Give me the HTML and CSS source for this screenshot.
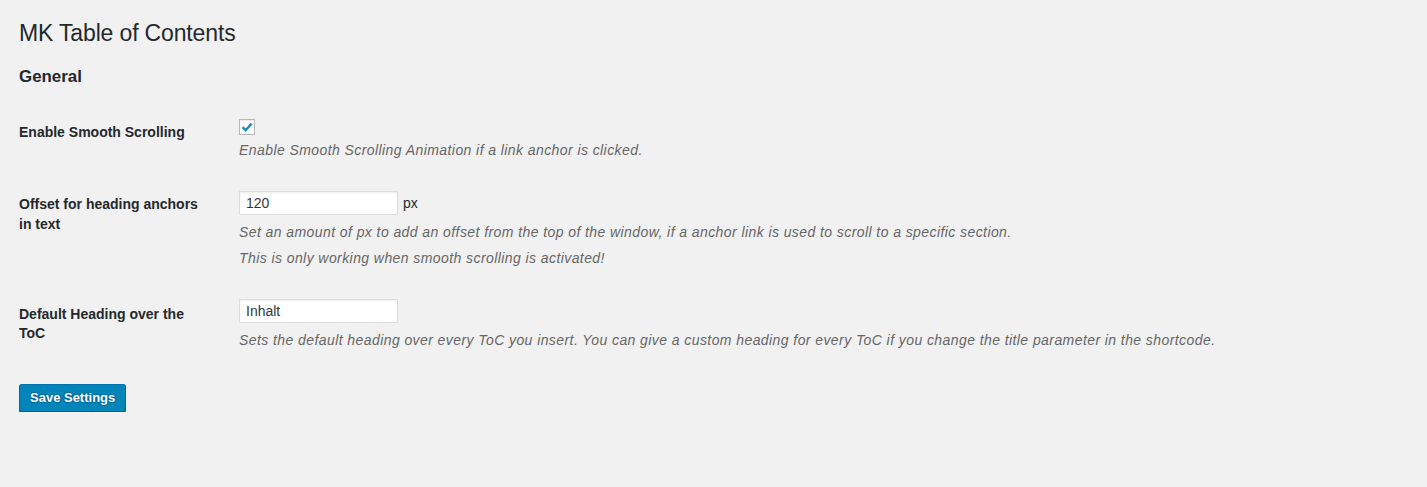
FILE: index.html
```html
<!DOCTYPE html>
<html>
<head>
<meta charset="utf-8">
<link rel="stylesheet" href="styles.css">
</head>
<body>
<div class="wrap">
  <h1 class="page-title">MK Table of Contents</h1>
  <h2 class="section-title">General</h2>
  <div class="form-table">
    <div class="row row-1">
      <div class="label">Enable Smooth Scrolling</div>
      <div class="field">
        <span class="checkbox">
          <svg width="12" height="10" viewBox="0 0 12 10"><path d="M1.5 5.2 L4.6 8.2 L10.6 1.6" fill="none" stroke="#1e8cbe" stroke-width="2.4"/></svg>
        </span>
        <p class="description">Enable Smooth Scrolling Animation if a link anchor is clicked.</p>
      </div>
    </div>
    <div class="row">
      <div class="label">Offset for heading anchors in text</div>
      <div class="field">
        <div class="input-line"><span class="text-input">120</span><span class="unit">px</span></div>
        <p class="description">Set an amount of px to add an offset from the top of the window, if a anchor link is used to scroll to a specific section.</p>
        <p class="description second">This is only working when smooth scrolling is activated!</p>
      </div>
    </div>
    <div class="row row-3">
      <div class="label">Default Heading over the ToC</div>
      <div class="field">
        <div class="input-line"><span class="text-input">Inhalt</span></div>
        <p class="description">Sets the default heading over every ToC you insert. You can give a custom heading for every ToC if you change the title parameter in the shortcode.</p>
      </div>
    </div>
  </div>
  <div class="submit"><button class="button-primary">Save Settings</button></div>
</div>
</body>
</html>
```

FILE: styles.css
```css
html, body {
  margin: 0;
  padding: 0;
  background: #f1f1f1;
  color: #23282d;
  font-family: "Liberation Sans", Arial, sans-serif;
  font-size: 13px;
}
.wrap {
  padding: 10px 0 0 19px;
}
.page-title {
  margin: 0;
  padding: 9px 0 4px;
  font-size: 23px;
  font-weight: 400;
  line-height: 1.3;
  color: #23282d;
  letter-spacing: -0.15px;
}
.section-title {
  margin: 13px 0 0;
  font-size: 16.9px;
  font-weight: 600;
  line-height: 1.3;
  color: #23282d;
}
.form-table {
  margin-top: 15px;
  display: flex;
  flex-direction: column;
}
.row {
  display: grid;
  grid-template-columns: 200px 1fr;
  column-gap: 20px;
}
.label {
  padding: 20px 0;
  font-size: 14px;
  font-weight: 700;
  line-height: 19.5px;
  color: #23282d;
  width: 190px;
}
.row-3 .label {
  padding-top: 21px;
}
.field {
  padding: 15px 0;
}
.checkbox {
  display: flex;
  align-items: center;
  justify-content: center;
  width: 14px;
  height: 14px;
  margin-top: 1px;
  border: 1px solid #b4b9be;
  background: #fff;
  box-shadow: inset 0 1px 2px rgba(0,0,0,.1);
}
.description {
  margin: 6px 0 0;
  font-size: 14px;
  line-height: 19.5px;
  letter-spacing: 0.42px;
  font-style: italic;
  color: #666;
}
.description.second {
  margin-top: 6.5px;
}
.input-line {
  display: flex;
  align-items: center;
  gap: 5px;
  margin-top: 1px;
}
.row-3 .input-line {
  margin-top: 0;
}
.text-input {
  box-sizing: border-box;
  display: block;
  width: 159px;
  height: 24px;
  padding: 0 6px;
  line-height: 22px;
  border: 1px solid #ddd;
  background: #fff;
  box-shadow: inset 0 1px 2px rgba(0,0,0,.07);
  font-size: 14px;
  color: #32373c;
}
.input-line + .description {
  margin-top: 8px;
}
.row-3 .input-line + .description {
  margin-top: 8px;
}
.unit {
  font-size: 14px;
  color: #23282d;
}
.submit {
  margin-top: 19px;
}
.button-primary {
  box-sizing: border-box;
  height: 28px;
  padding: 0 10px 1px;
  background: #0085ba;
  border: 1px solid;
  border-color: #0073aa #006799 #006799;
  border-radius: 3px;
  box-shadow: 0 1px 0 #006799;
  color: #fff;
  font-family: "Liberation Sans", Arial, sans-serif;
  font-size: 13px;
  font-weight: 700;
  text-shadow: 0 -1px 1px #006799, 1px 0 1px #006799, 0 1px 1px #006799, -1px 0 1px #006799;
}
```
